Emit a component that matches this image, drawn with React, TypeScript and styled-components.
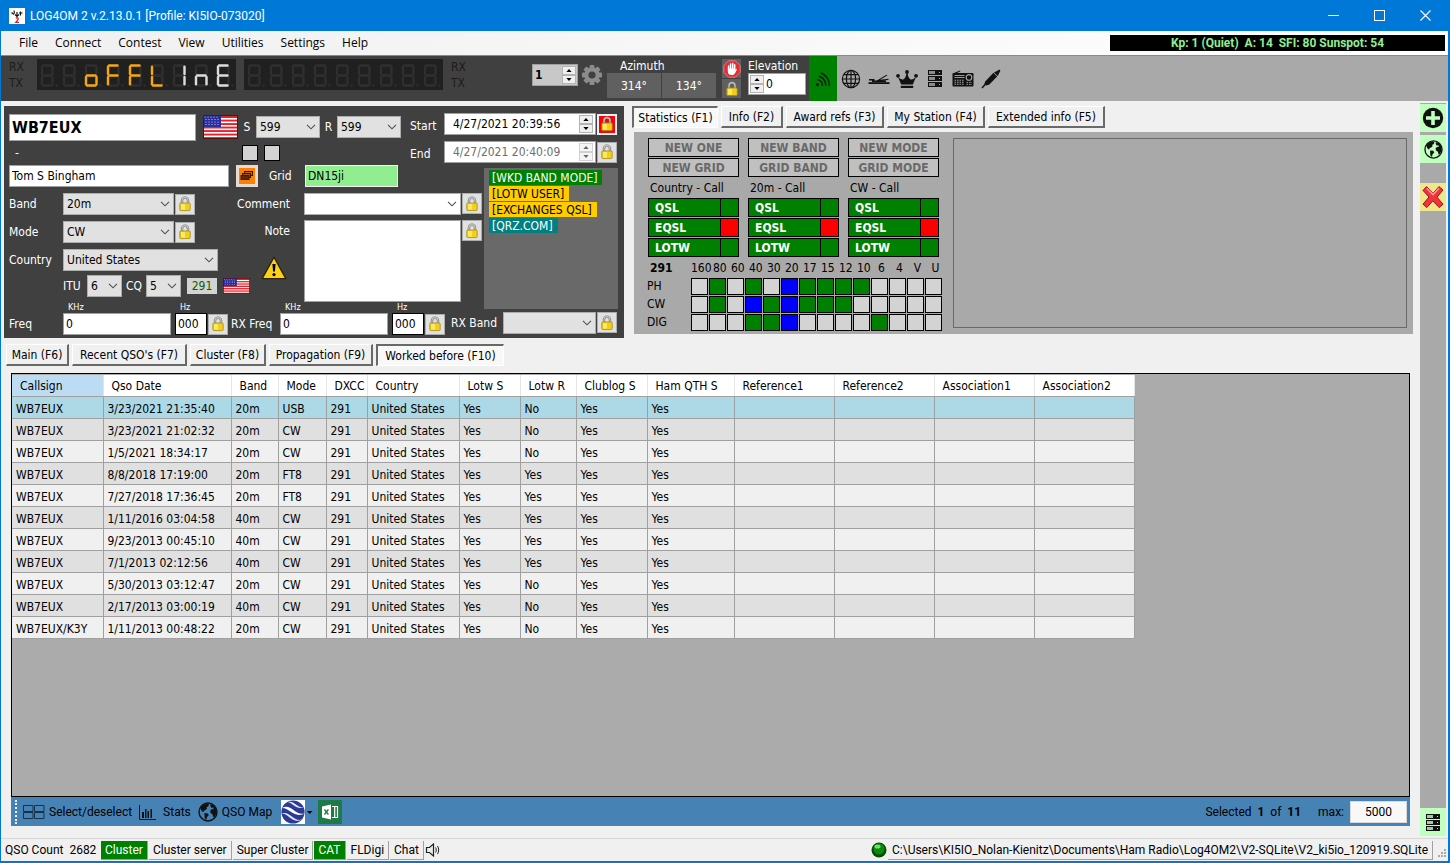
import React from 'react';
import styled, { createGlobalStyle } from 'styled-components';

const TAHOMA = `Tahoma, "DejaVu Sans Condensed", "DejaVu Sans", sans-serif`;
const SEGOE = `"Segoe UI", "Open Sans", "Noto Sans", sans-serif`;
const SEGOE_NARROW = `"Segoe UI", Roboto, "Open Sans", sans-serif`;

const GlobalStyle = createGlobalStyle`
  *, *::before, *::after { box-sizing: border-box; }
  body { margin: 0; background: #f0f0f0; font-family: ${TAHOMA}; font-size: 12px; color: #000; }
  button, input, select, textarea { font: inherit; color: inherit; margin: 0; border-radius: 0; }
  button { padding: 0; cursor: default; }
  svg { display: block; flex: none; }
`;

/* ---------- window frame ---------- */

const Window = styled.div`
  min-height: 100vh;
  display: flex;
  flex-direction: column;
  border: solid #0078d7;
  border-width: 0 2px 2px 1px;
  background: #f0f0f0;
`;

const TitleBar = styled.header`
  display: flex;
  align-items: center;
  height: 31px;
  padding-left: 8px;
  background: #0078d7;
  color: #fff;
  font-family: ${SEGOE_NARROW};
`;

const Title = styled.h1`
  flex: 1;
  margin: 0 0 0 5px;
  font-size: 12px;
  font-weight: 400;
`;

const CaptionButton = styled.button`
  width: 46px;
  height: 30px;
  display: grid;
  place-items: center;
  border: 0;
  background: none;
  color: #fff;
`;

const MenuBar = styled.nav`
  display: flex;
  align-items: center;
  height: 25px;
  padding: 0 3px 2px 10px;
  border-bottom: 1px solid #8a8a8a;
  background: linear-gradient(90deg, #f0f0f0, #ffffff);
  font-family: ${SEGOE};
`;

const MenuItem = styled.button`
  padding: 0 8px;
  margin-right: 1px;
  border: 0;
  background: none;
`;

const Propagation = styled.output`
  width: 335px;
  height: 16px;
  margin: 1px 0 0 auto;
  background: #000;
  color: #90ee90;
  font-family: ${SEGOE_NARROW};
  font-weight: 700;
  line-height: 16px;
  text-align: center;
  white-space: pre;
`;

/* ---------- toolbar ---------- */

const Toolbar = styled.div`
  display: flex;
  height: 45px;
  background: #a9a9a9;
`;

const RadioPanel = styled.div`
  display: flex;
  align-items: flex-start;
  width: 808px;
  padding: 3px 0 0 8px;
  background: #404040;
  color: #fff;
`;

const RxTx = styled.div<{ $width: number }>`
  width: ${p => p.$width}px;
  color: #1c1c1c;
  line-height: 16px;
`;

const Display = styled.div`
  width: 199px;
  height: 31px;
  margin-right: 8px;
  background: #202020;
`;

const Stack = styled.div<{ $gap?: number }>`
  display: flex;
  flex-direction: column;
  gap: ${p => p.$gap ?? 0}px;
`;

const NumberBox = styled.div<{ $width: number; $bg: string; $top?: number }>`
  display: flex;
  align-items: center;
  width: ${p => p.$width}px;
  height: 22px;
  margin-top: ${p => p.$top ?? 0}px;
  padding: 1px;
  border: 1px solid #a0a0a0;
  background: ${p => p.$bg};
  color: #000;
`;

const BareInput = styled.input<{ $bold?: boolean; $pad?: number }>`
  flex: 1;
  min-width: 0;
  height: 100%;
  border: 0;
  padding: 0 0 0 ${p => p.$pad ?? 2}px;
  background: transparent;
  font-weight: ${p => (p.$bold ? 700 : 400)};
`;

const SpinBox = styled.div`
  display: flex;
  flex-direction: column;
  width: 14px;
`;

const SpinButton = styled.button`
  display: grid;
  place-items: center;
  height: 9px;
  border: 1px solid #b4b4b4;
  background: #f0f0f0;
`;

const ToolGear = styled.button`
  margin: 5px 0 0 3px;
  border: 0;
  background: none;
`;

const Azimuth = styled.div`
  display: flex;
  flex-direction: column;
  width: 115px;
  margin-left: 4px;
  span { line-height: 14px; padding-left: 13px; }
  div { display: flex; gap: 1px; }
`;

const AngleButton = styled.button`
  width: 54px;
  height: 25px;
  border: 0;
  background: #606060;
`;

const SmallIconButton = styled.button`
  display: grid;
  place-items: center;
  width: 19px;
  height: 19px;
  border: 0;
  background: #606060;
`;

const Elevation = styled.div`
  display: flex;
  flex-direction: column;
  margin-left: 7px;
  label { line-height: 14px; }
`;

const ToolButton = styled.button<{ $active?: boolean }>`
  display: grid;
  place-items: center;
  width: 28px;
  height: 45px;
  border: 0;
  background: ${p => (p.$active ? '#008000' : 'transparent')};
`;

/* ---------- body ---------- */

const Body = styled.div`
  flex: 1;
  display: flex;
  padding: 2px 2px 0 3px;
`;

const Main = styled.main`
  flex: 1;
  min-width: 0;
  display: flex;
  flex-direction: column;
  padding: 3px 7px 0 0;
`;

const Upper = styled.div`
  display: grid;
  grid-template-columns: 620px minmax(0, 1fr);
  gap: 8px;
`;

const Side = styled.aside`
  display: flex;
  flex-direction: column;
  width: 26px;
  margin-bottom: 2px;
  background: #a9a9a9;
`;

const SideButton = styled.button<{ $bg: string; $gap?: number; $end?: boolean }>`
  display: grid;
  place-items: center;
  height: 28px;
  margin-top: ${p => (p.$end ? 'auto' : `${p.$gap ?? 0}px`)};
  border: 0;
  background: ${p => p.$bg};
`;

/* ---------- QSO form ---------- */

const QsoForm = styled.form`
  padding: 7px 6px 2px 5px;
  background: #404040;
  color: #fff;
  input, select, textarea { color: #000; }
`;

const FormTop = styled.div`
  display: flex;
`;

const Line = styled.div<{ $height?: number; $gap?: number }>`
  display: flex;
  align-items: center;
  height: ${p => p.$height ?? 22}px;
  gap: ${p => p.$gap ?? 0}px;
`;

const Label = styled.label<{ $width?: number; $align?: string }>`
  flex: none;
  width: ${p => (p.$width ? `${p.$width}px` : 'auto')};
  text-align: ${p => p.$align ?? 'left'};
  white-space: nowrap;
`;

const CallInput = styled.input`
  width: 187px;
  height: 27px;
  margin-right: 7px;
  padding: 0 2px;
  border: 1px solid #a0a0a0;
  background: #fff;
  font-size: 16px;
  font-weight: 700;
`;

const TextInput = styled.input<{ $width: number; $bg?: string; $tone?: string }>`
  width: ${p => p.$width}px;
  height: 22px;
  padding: 0 0 1px 2px;
  border: 1px solid ${p => p.$tone ?? '#a0a0a0'};
  background: ${p => p.$bg ?? '#fff'};
`;

const Dash = styled.span`
  width: 233px;
  padding-left: 6px;
`;

const Tick = styled.input`
  appearance: none;
  width: 16px;
  height: 16px;
  border: 1px solid #000;
  background: #d3d3d3;
`;

const Dates = styled.div`
  display: grid;
  grid-template-columns: 34px 152px 21px;
  grid-auto-rows: 22px;
  gap: 6px 0;
  align-items: center;
  padding-left: 9px;
  ${Label} { padding-top: 4px; }
`;

const DateBox = styled.div<{ $off?: boolean }>`
  display: flex;
  align-items: center;
  height: 22px;
  padding: 1px 2px 1px 0;
  border: 1px solid #a0a0a0;
  background: #fff;
  input { color: ${p => (p.$off ? '#6d6d6d' : '#000')}; }
  button { opacity: ${p => (p.$off ? 0.6 : 1)}; }
`;

const LockButton = styled.button<{ $alert?: boolean }>`
  display: grid;
  place-items: center;
  flex: none;
  width: 20px;
  height: 21px;
  margin-left: 1px;
  border: ${p => (p.$alert ? '2px solid #e6f0fa' : '1px solid #adadad')};
  background: ${p => (p.$alert ? '#ff0000' : '#e1e1e1')};
`;

const CardButton = styled.button`
  display: grid;
  place-items: center;
  width: 22px;
  height: 22px;
  margin: 0 11px 0 7px;
  border: 3px solid #e4dcd4;
  background: #ff8000;
`;

const FormGrid = styled.div`
  display: grid;
  grid-template-columns: 442px 33px 134px;
  grid-template-rows: 137px 7px 27px;
`;

const Details = styled.div`
  grid-area: 1 / 1 / 2 / 3;
`;

const DetailColumns = styled.div`
  display: flex;
  margin-top: 6px;
`;

const Fields = styled.div`
  width: 228px;
  display: grid;
  grid-template-columns: 54px max-content;
  grid-auto-rows: 22px;
  row-gap: 6px;
  align-items: center;
`;

const Zones = styled.div`
  grid-column: 2;
  display: flex;
  align-items: center;
  height: 20px;
  margin-top: -4px;
`;

const Dxcc = styled.output`
  width: 30px;
  height: 16px;
  margin: 0 6px;
  background: #d3d3d3;
  color: #006400;
  line-height: 16px;
  text-align: center;
`;

const Remarks = styled.div`
  display: grid;
  grid-template-columns: 53px 192px;
  grid-template-rows: 22px 82px;
  row-gap: 5px;
`;

const RemarkLabel = styled.div`
  display: flex;
  flex-direction: column;
  align-items: flex-end;
  gap: 18px;
  padding-top: 4px;
  svg { margin-right: 3px; }
`;

const RemarkField = styled.div`
  display: flex;
  align-items: flex-start;
  padding-left: 14px;
`;

const NoteArea = styled.textarea`
  flex: none;
  width: 157px;
  height: 82px;
  border: 1px solid #a0a0a0;
  background: #fff;
  resize: none;
`;

const SelectFrame = styled.span<{ $width: number }>`
  position: relative;
  display: block;
  flex: none;
  width: ${p => p.$width}px;
  svg { position: absolute; right: 4px; top: 8px; pointer-events: none; }
`;

const Select = styled.select<{ $bg?: string }>`
  appearance: none;
  display: block;
  width: 100%;
  height: 22px;
  padding: 0 14px 0 3px;
  border: 1px solid #adadad;
  background: ${p => p.$bg ?? '#e1e1e1'};
`;

const Tags = styled.ul`
  grid-area: 1 / 3 / 3 / 4;
  margin: 3px 0 0;
  padding: 2px 5px;
  list-style: none;
  background: #696969;
  li { height: 16px; }
`;

const Tag = styled.span<{ $bg: string; $fg: string }>`
  display: inline-block;
  height: 15px;
  padding: 0 5px 0 3px;
  background: ${p => p.$bg};
  color: ${p => p.$fg};
  line-height: 16px;
  white-space: nowrap;
`;

const Frequencies = styled.div`
  grid-area: 2 / 1 / 4 / 2;
  display: flex;
  gap: 3px;
`;

const FreqGroup = styled.div<{ $label: number }>`
  display: grid;
  grid-template-columns: ${p => p.$label}px 112px 32px 21px;
  grid-template-rows: 11px 22px;
  align-items: center;
  small { font-size: 9px; line-height: 11px; padding-left: 5px; }
`;

const RxBand = styled.div`
  grid-area: 3 / 2 / 4 / 4;
  display: flex;
  align-items: center;
`;

/* ---------- tabs ---------- */

const TabList = styled.div`
  display: flex;
  gap: 3px;
`;

const Tab = styled.button<{ $on?: boolean; $width: number }>`
  min-width: ${p => p.$width}px;
  height: 22px;
  padding-top: 1px;
  border-style: solid;
  border-width: ${p => (p.$on ? '2px 1px 1px 2px' : '1px 2px 2px 1px')};
  border-color: ${p => (p.$on ? '#696969 #fff #fff #696969' : '#fff #696969 #696969 #fff')};
  background: ${p => (p.$on ? '#f8f8f8' : '#f0f0f0')};
  line-height: 18px;
  white-space: nowrap;
`;

/* ---------- statistics ---------- */

const StatColumn = styled.section`
  display: flex;
  flex-direction: column;
  min-width: 0;
  padding-bottom: 4px;
`;

const StatPanel = styled.div`
  flex: 1;
  display: flex;
  margin: 4px 0 0 2px;
  padding: 6px 6px 1px;
  background: #a9a9a9;
`;

const Summary = styled.div`
  width: 313px;
  padding-left: 8px;
`;

const Groups = styled.div`
  display: grid;
  grid-template-columns: repeat(3, 91px);
  gap: 9px;
`;

const NewFlag = styled.div`
  height: 19px;
  margin-bottom: 1px;
  border: 1px solid #000;
  background: #c0c0c0;
  color: #696969;
  font-weight: 700;
  line-height: 18px;
  text-align: center;
`;

const GroupTitle = styled.div`
  height: 20px;
  padding-left: 2px;
  line-height: 20px;
`;

const Confirm = styled.div<{ $ok: boolean }>`
  display: flex;
  height: 19px;
  margin-bottom: 1px;
  border: 1px solid #000;
  background: #008000;
  color: #fff;
  font-weight: 700;
  line-height: 18px;
  padding-left: 6px;
  &::after {
    content: '';
    width: 18px;
    margin-left: auto;
    border-left: 1px solid #000;
    background: ${p => (p.$ok ? '#008000' : '#ff0000')};
  }
`;

const Matrix = styled.table`
  width: 297px;
  margin: 1px 0 0 -2px;
  border-spacing: 1px;
  table-layout: fixed;
  th { height: 17px; padding: 0; font-weight: 400; text-align: left; line-height: 17px; white-space: nowrap; }
  thead th { text-align: center; }
  thead th + th + th { padding-left: 4px; }
  thead th:first-child { text-align: left; font-weight: 700; padding-left: 3px; }
`;

const Slot = styled.td<{ $state: string }>`
  height: 17px;
  padding: 0;
  border: 1px solid #000;
  background: ${p => (p.$state === 'g' ? '#008000' : p.$state === 'b' ? '#0000ff' : '#d3d3d3')};
`;

const EmptyBox = styled.div`
  flex: 1;
  margin-bottom: 5px;
  border: 1px solid #696969;
`;

/* ---------- log table ---------- */

const LogTabs = styled(TabList)`
  padding: 6px 0 0 2px;
`;

const LogPanel = styled.div`
  flex: 1;
  display: flex;
  flex-direction: column;
  margin: 7px 3px 12px 7px;
`;

const GridArea = styled.div`
  flex: 1;
  overflow: hidden;
  padding-top: 1px;
  border: 1px solid #000;
  background: #ababab;
`;

const LogTable = styled.table`
  width: 1122px;
  table-layout: fixed;
  border-collapse: collapse;
  th {
    height: 21px;
    padding: 2px 0 0 8px;
    border-right: 1px solid #e5e5e5;
    border-bottom: 1px solid #a0a0a0;
    background: #fff;
    font-weight: 400;
    text-align: left;
    line-height: 17px;
    white-space: nowrap;
  }
  th:first-child { background: #bcdcf4; }
`;

const LogRow = styled.tr<{ $shade: string }>`
  height: 22px;
  background: ${p => p.$shade};
  td {
    padding: 4px 0 0 4px;
    border-right: 1px solid #a0a0a0;
    border-bottom: 1px solid #a0a0a0;
    line-height: 17px;
    white-space: nowrap;
  }
`;

const ActionBar = styled.div`
  display: flex;
  align-items: center;
  height: 29px;
  padding: 0 3px 0 4px;
  background: #4682b4;
  font-family: ${SEGOE_NARROW};
  white-space: pre;
`;

const Grip = styled.span`
  height: 24px;
  margin-right: 6px;
  border-left: 2px dotted #e8f0f8;
`;

const ActionButton = styled.button<{ $gap?: number; $inner?: number }>`
  display: flex;
  align-items: center;
  gap: ${p => p.$inner ?? 4}px;
  margin-right: ${p => p.$gap ?? 7}px;
  border: 0;
  background: none;
`;

const Totals = styled.span`
  margin: 0 17px 0 auto;
`;

const MaxInput = styled.input`
  width: 57px;
  height: 22px;
  margin-left: 6px;
  border: 1px solid #dadada;
  background: #f8f8f8;
  text-align: center;
`;

/* ---------- status bar ---------- */

const StatusBar = styled.footer`
  display: flex;
  align-items: center;
  height: 23px;
  padding: 0 1px 0 4px;
  border-top: 1px solid #d7d7d7;
  font-family: ${SEGOE_NARROW};
  white-space: pre;
`;

const Count = styled.span`
  width: 96px;
`;

const Spacer = styled.span`
  flex: 1;
`;

const StatusButton = styled.button<{ $on?: boolean }>`
  height: 19px;
  margin-right: 1px;
  padding: 0 4px;
  border: solid #a0a0a0;
  border-width: 0 1px 1px 0;
  background: ${p => (p.$on ? '#008000' : 'transparent')};
  color: ${p => (p.$on ? '#fff' : '#000')};
  line-height: 18px;
`;

const PathLabel = styled.span`
  height: 19px;
  margin-left: 1px;
  padding: 0 4px;
  border: solid #a0a0a0;
  border-width: 0 1px 1px 0;
  line-height: 18px;
`;

/* ---------- drawings ---------- */

const Lock = () => (
  <svg width="14" height="16" viewBox="0 0 14 16">
    <path d="M4 8V4.6a3 3 0 0 1 6 0V8" fill="none" stroke="#777" strokeWidth="2.4" />
    <path d="M4 8V4.6a3 3 0 0 1 6 0V8" fill="none" stroke="#c8c8c8" strokeWidth="1.1" />
    <rect x="1.8" y="7" width="10.4" height="7.6" rx="1" fill="#f3cf1c" stroke="#a58a14" strokeWidth="0.8" />
    <rect x="3" y="8" width="4" height="5.6" fill="#fff27a" opacity="0.75" />
  </svg>
);

const Chevron = () => (
  <svg width="10" height="6" viewBox="0 0 10 6">
    <path d="M1 .8 5 4.8 9 .8" fill="none" stroke="#505050" strokeWidth="1.1" />
  </svg>
);

const UsFlag = ({ width, height }: { width: number; height: number }) => (
  <svg width={width} height={height} viewBox="0 0 35 24" preserveAspectRatio="none" role="img" aria-label="United States">
    <rect width="35" height="24" fill="#e8202a" />
    {[3, 6.5, 10, 13.5, 17, 20.5].map(y => <rect key={y} y={y} width="35" height="1.6" fill="#fff" />)}
    <rect width="18" height="12" fill="#2a2f9c" />
    {[2, 4.5, 7, 9.5].map(y =>
      [2, 5, 8, 11, 14].map(x => <circle key={`${x}-${y}`} cx={x + (y % 2 ? 1 : 0)} cy={y} r="0.6" fill="#cfd4ff" />))}
    <rect x=".5" y=".5" width="34" height="23" fill="none" stroke="#5a1010" />
  </svg>
);

const SEGMENTS: Record<string, string> = {
  a: 'M3 1.5H11.5', b: 'M12.5 2.8V10', c: 'M12.5 13V20.2', d: 'M3 21.5H11.5',
  e: 'M2 13V20.2', f: 'M2 2.8V10', g: 'M3 11.5H11.5',
};

const SegmentDisplay = ({ digits, colors, text }: { digits: string[]; colors: string[]; text: string }) => (
  <Display>
    <svg width="199" height="31" viewBox="0 0 199 31" role="img" aria-label={text}>
      {Array.from({ length: 9 }, (_, i) => (
        <g key={i} transform={`translate(${3 + i * 22} 5)`} strokeLinecap="round" fill="none">
          {Object.entries(SEGMENTS).map(([k, d]) => <path key={k} d={d} stroke="#2f2f2f" strokeWidth="2.4" />)}
          <circle cx="16.5" cy="21.5" r="1.2" fill="#2f2f2f" />
          {(digits[i] ?? '').split('').map(k => <path key={k} d={SEGMENTS[k]} stroke={colors[i]} strokeWidth="2.4" />)}
        </g>
      ))}
    </svg>
  </Display>
);

const Gear = () => (
  <svg width="22" height="22" viewBox="0 0 22 22">
    <g fill="#8c8c8c">
      {[0, 45, 90, 135].map(a => <rect key={a} x="8.6" y="1" width="4.8" height="20" rx="1" transform={`rotate(${a} 11 11)`} />)}
      <circle cx="11" cy="11" r="7.6" />
    </g>
    <circle cx="11" cy="11" r="3.6" fill="#404040" />
  </svg>
);

const StopHand = () => (
  <svg width="18" height="18" viewBox="0 0 18 18">
    <path d="M5.6.8h6.8l4.8 4.8v6.8l-4.8 4.8H5.6L.8 12.4V5.6z" fill="#dd3038" stroke="#f08a8e" strokeWidth=".8" />
    <path d="M5.6 11V6M7.6 9V4M9.7 9V3.6M11.7 9.4V4.8" stroke="#fff" strokeWidth="1.5" strokeLinecap="round" />
    <path d="M4.9 8.6V12c0 2 1.6 3 3.8 3 1.8 0 2.8-.8 3.6-2.3l1.7-3.4c-.8-.5-1.4 0-2.3 1.2V8.6z" fill="#fff" />
  </svg>
);

const Signal = () => (
  <svg width="16" height="16" viewBox="0 0 16 16" fill="none" stroke="#0a1c0a" strokeWidth="1.5">
    <circle cx="2.4" cy="13.6" r="1.6" fill="#0a1c0a" stroke="none" />
    <path d="M2.6 8.8a5.4 5.4 0 0 1 4.8 6M4 5.2a10 10 0 0 1 6.8 9.6M5.8 1.8a13.6 13.6 0 0 1 8.6 13" />
  </svg>
);

const Globe = () => (
  <svg width="20" height="20" viewBox="0 0 20 20" fill="none" stroke="#111" strokeWidth="1.2">
    <circle cx="10" cy="10" r="8.6" />
    <ellipse cx="10" cy="10" rx="4.6" ry="8.6" />
    <path d="M10 1.4v17.2M1.4 10h17.2M3 5.6h14M3 14.4h14" />
  </svg>
);

const Key = () => (
  <svg width="22" height="12" viewBox="0 0 22 12">
    <path d="M.5 9.2h21v1.8H.5z" fill="#111" />
    <path d="M1 6h5.5v1.4H1zM4 7.6h14V9H4z" fill="#111" />
    <path d="m8.500 7.800 10-6 .8.700-7.300 4.300 8.500-1.100.2 1-11 2.200z" fill="#111" />
  </svg>
);

const Crown = () => (
  <svg width="22" height="20" viewBox="0 0 22 20" fill="#111">
    <path d="M2 8c1.500 1.500 3 2.500 4.500 2.500C8.500 10.500 10 8 10.300 4.500h1.400C12 8 13.500 10.500 15.500 10.500 17 10.500 18.500 9.500 20 8l-3.200 7.500H5.200z" />
    <path d="M4.800 16.800h12.400v2.200H4.800z" />
    <circle cx="11" cy="3" r="1.900" /><circle cx="2" cy="6.800" r="1.900" /><circle cx="20" cy="6.800" r="1.900" />
  </svg>
);

const Server = ({ light = '#a9a9a9' }: { light?: string }) => (
  <svg width="14" height="17" viewBox="0 0 14 17">
    {[0, 6, 12].map(y => (
      <g key={y}>
        <rect y={y} width="14" height="5" fill="#111" />
        <rect x="1" y={y + 1} width="6" height="3" fill={light} opacity=".8" />
        <rect x="11" y={y + 2} width="1" height="1" fill={light} />
      </g>
    ))}
  </svg>
);

const Transceiver = () => (
  <svg width="22" height="17" viewBox="0 0 22 17">
    <path d="M2 3 8 .4l.4.8L5 3z" fill="#111" />
    <rect x=".5" y="3" width="21" height="13.5" rx="1" fill="#111" />
    <path d="M2.5 5.5h10M2.5 7.5h10" stroke="#a9a9a9" strokeWidth=".9" />
    <circle cx="17" cy="7.4" r="2.8" fill="#111" stroke="#a9a9a9" strokeWidth="1.1" />
    <path d="M2.5 10.2h10M2.5 12.2h10M2.5 14.2h10" stroke="#a9a9a9" strokeWidth="1" strokeDasharray="1.6 .9" />
    <path d="M14.5 12.4h5.5M14.5 14.4h5.5" stroke="#a9a9a9" strokeWidth=".9" strokeDasharray="1.6 .9" />
  </svg>
);

const Plug = () => (
  <svg width="20" height="20" viewBox="0 0 20 20">
    <path d="M1 19 4.500 15" stroke="#111" strokeWidth="1.500" />
    <path d="M4.200 12.400 12.400 3.800l3.800 3.600L8 15.800l-3 .8-1.600-1.600z" fill="#111" />
    <path d="M13 3.400 18.600.6l.8.8-2.600 5.600z" fill="#111" />
  </svg>
);

const Cards = () => (
  <svg width="14" height="12" viewBox="0 0 14 12" stroke="#3a1c00">
    <rect x="4.5" y="1.5" width="8" height="4" fill="#c06000" />
    <rect x="2.5" y="3.5" width="8" height="4" fill="#a85400" />
    <rect x="1" y="5.5" width="8" height="4" fill="#5c2c00" />
  </svg>
);

const Warning = () => (
  <svg width="26" height="24" viewBox="0 0 26 24">
    <path d="M13 1.2 24.8 22.6H1.2z" fill="#fdd017" stroke="#2a2200" strokeWidth="1.3" strokeLinejoin="round" />
    <path d="M11.4 8h3.2l-.7 7.6h-1.8z" fill="#000" />
    <circle cx="13" cy="18.6" r="1.6" fill="#000" />
  </svg>
);

const Plus = () => (
  <svg width="22" height="22" viewBox="0 0 22 22">
    <circle cx="11" cy="11" r="10.2" fill="#111" />
    <path d="M11 4v14M4 11h14" stroke="#c0ffc0" strokeWidth="3.6" />
  </svg>
);

const Earth = ({ size = 20 }: { size?: number }) => (
  <svg width={size} height={size} viewBox="0 0 20 20">
    <circle cx="10" cy="10" r="9" fill="none" stroke="#111" strokeWidth="1.4" />
    <path d="M2.4 6C4 3.4 6.6 1.600 9.600 1.400l1.400 1.200-.8 1.800-1.600.6.4 1.600L7.600 8 6 8.400l-.6 1.800L3.600 9zM6.400 11l3.400.4 1 1.800-1.800 1.800-.6 2.800L6.600 16zM12.400 2l3.400 1.400 2.600 3.600.4 4-2 3.600-1.400 1-.8-3.200-2-1.400-.4-2.400 1.800-1.600 1.600.4-.4-1.800-2 .2-.8-1.800z" fill="#111" />
  </svg>
);

const RedCross = () => (
  <svg width="22" height="24" viewBox="0 0 22 24">
    <path d="M4.6 1.6 11 8.4l6-6.8 4 3.4-6 7.2 6 7-3.8 3.4-6.4-6.8-6 6.8L1 19.2 7 12 1 5.4z" fill="#f0343c" stroke="#9c1218" strokeWidth="1" />
    <path d="M4.8 3.2 11 9.8l6-6.6" stroke="#ff9a9e" strokeWidth="1.4" fill="none" />
  </svg>
);

const AppLogo = () => (
  <svg width="16" height="16" viewBox="0 0 16 16">
    <rect width="16" height="16" fill="#fff" />
    <path d="M2.5 4.5 5 6.5M5 2.5l.5 3M6 6.5l2 2 2-2M8 8.5V4M13.5 5H10M11.5 3.5v4" stroke="#111" strokeWidth="1.2" fill="none" />
    <path d="M6.8 10.3c1.6-1.2 3.2 0 2 1.5L6.8 14.3H10" stroke="#d22" strokeWidth="1.3" fill="none" />
  </svg>
);

const Spin = ({ name }: { name: string }) => (
  <SpinBox>
    <SpinButton type="button" aria-label={`${name} up`}>
      <svg width="6" height="3" viewBox="0 0 6 3"><path d="M3 0 5.6 3H.4z" /></svg>
    </SpinButton>
    <SpinButton type="button" aria-label={`${name} down`}>
      <svg width="6" height="3" viewBox="0 0 6 3"><path d="M3 3 5.6 0H.4z" /></svg>
    </SpinButton>
  </SpinBox>
);

/* ---------- parts ---------- */

const Combo = ({ id, value, width, bg }: { id: string; value: string; width: number; bg?: string }) => (
  <SelectFrame $width={width}>
    <Select id={id} $bg={bg} defaultValue={value}><option>{value}</option></Select>
    <Chevron />
  </SelectFrame>
);

const LockToggle = ({ name, alert }: { name: string; alert?: boolean }) => (
  <LockButton type="button" $alert={alert} aria-label={`Lock ${name}`}><Lock /></LockButton>
);

const Frequency = ({ id, label, width }: { id: string; label: string; width: number }) => (
  <FreqGroup $label={width}>
    <span /><small>KHz</small><small>Hz</small><span />
    <Label htmlFor={id}>{label}</Label>
    <TextInput id={id} $width={108} defaultValue="0" />
    <TextInput $width={32} $tone="#000" defaultValue="000" aria-label={`${label} Hz`} />
    <LockToggle name={label} />
  </FreqGroup>
);

const Tabs = ({ items, active }: { items: [string, number][]; active: number }) => (
  <>
    {items.map(([t, w], i) => (
      <Tab key={t} role="tab" $width={w} $on={i === active} aria-selected={i === active}>{t}</Tab>
    ))}
  </>
);

const MENU = ['File', 'Connect', 'Contest', 'View', 'Utilities', 'Settings', 'Help'];

const INFO_TABS: [string, number][] = [
  ['Statistics (F1)', 86], ['Info (F2)', 62], ['Award refs (F3)', 98], ['My Station (F4)', 98], ['Extended info (F5)', 117],
];

const LOG_TABS: [string, number][] = [
  ['Main (F6)', 63], ["Recent QSO's (F7)", 115], ['Cluster (F8)', 76], ['Propagation (F9)', 104], ['Worked before (F10)', 128],
];

const TAGS = [
  ['[WKD BAND MODE]', '#008000', '#fff'],
  ['[LOTW USER]', '#ffcc00', '#000'],
  ['[EXCHANGES QSL]', '#ffcc00', '#000'],
  ['[QRZ.COM]', '#008080', '#fff'],
];

const GROUPS = [
  { flags: ['NEW ONE', 'NEW GRID'], title: 'Country - Call' },
  { flags: ['NEW BAND', 'GRID BAND'], title: '20m - Call' },
  { flags: ['NEW MODE', 'GRID MODE'], title: 'CW - Call' },
];

const BANDS = ['160', '80', '60', '40', '30', '20', '17', '15', '12', '10', '6', '4', 'V', 'U'];
const SLOTS: [string, string][] = [
  ['PH', '.g.g.bgggg....'],
  ['CW', '.g.bgbggg.....'],
  ['DIG', '...ggb....g...'],
];

const COLUMNS: [string, number][] = [
  ['Callsign', 91], ['Qso Date', 128], ['Band', 47], ['Mode', 48], ['DXCC', 41], ['Country', 92], ['Lotw S', 61],
  ['Lotw R', 56], ['Clublog S', 71], ['Ham QTH S', 87], ['Reference1', 100], ['Reference2', 100],
  ['Association1', 100], ['Association2', 100],
];

const LOG: [string, string, string, string, string][] = [
  ['WB7EUX', '3/23/2021 21:35:40', '20m', 'USB', 'No'],
  ['WB7EUX', '3/23/2021 21:02:32', '20m', 'CW', 'No'],
  ['WB7EUX', '1/5/2021 18:34:17', '20m', 'CW', 'No'],
  ['WB7EUX', '8/8/2018 17:19:00', '20m', 'FT8', 'Yes'],
  ['WB7EUX', '7/27/2018 17:36:45', '20m', 'FT8', 'Yes'],
  ['WB7EUX', '1/11/2016 03:04:58', '40m', 'CW', 'Yes'],
  ['WB7EUX', '9/23/2013 00:45:10', '40m', 'CW', 'Yes'],
  ['WB7EUX', '7/1/2013 02:12:56', '40m', 'CW', 'Yes'],
  ['WB7EUX', '5/30/2013 03:12:47', '20m', 'CW', 'No'],
  ['WB7EUX', '2/17/2013 03:00:19', '40m', 'CW', 'No'],
  ['WB7EUX/K3Y', '1/11/2013 00:48:22', '20m', 'CW', 'No'],
];

const AMBER = '#f5a80c';
const WHITE = '#dcdcdc';

function TopToolbar() {
  return (
    <Toolbar>
      <RadioPanel>
        <RxTx $width={28}>RX<br />TX</RxTx>
        <SegmentDisplay
          text="oFFLInE"
          digits={['', '', 'cdeg', 'aefg', 'aefg', 'def', 'bc', 'ceg', 'adefg']}
          colors={['', '', AMBER, AMBER, AMBER, AMBER, WHITE, WHITE, WHITE]}
        />
        <SegmentDisplay text="" digits={[]} colors={[]} />
        <RxTx $width={81}>RX<br />TX</RxTx>
        <NumberBox $width={46} $bg="#c8c8c8" $top={5}>
          <BareInput $bold defaultValue="1" aria-label="Radio number" $pad={1} />
          <Spin name="Radio number" />
        </NumberBox>
        <ToolGear type="button" aria-label="Radio settings"><Gear /></ToolGear>
        <Azimuth>
          <span>Azimuth</span>
          <div><AngleButton type="button">314°</AngleButton><AngleButton type="button">134°</AngleButton></div>
        </Azimuth>
        <Stack $gap={1}>
          <SmallIconButton type="button" aria-label="Stop rotator"><StopHand /></SmallIconButton>
          <SmallIconButton type="button" aria-label="Lock rotator"><Lock /></SmallIconButton>
        </Stack>
        <Elevation>
          <label htmlFor="elevation">Elevation</label>
          <NumberBox $width={58} $bg="#fff">
            <Spin name="Elevation" />
            <BareInput id="elevation" defaultValue="0" />
          </NumberBox>
        </Elevation>
      </RadioPanel>
      <ToolButton $active aria-label="Signal"><Signal /></ToolButton>
      <ToolButton aria-label="Globe"><Globe /></ToolButton>
      <ToolButton aria-label="CW keyer"><Key /></ToolButton>
      <ToolButton aria-label="Awards"><Crown /></ToolButton>
      <ToolButton aria-label="Cluster list"><Server /></ToolButton>
      <ToolButton aria-label="Transceiver"><Transceiver /></ToolButton>
      <ToolButton aria-label="Connections"><Plug /></ToolButton>
    </Toolbar>
  );
}

function Qso() {
  return (
    <QsoForm>
      <FormTop>
        <div>
          <Line $height={28}>
            <CallInput defaultValue="WB7EUX" aria-label="Callsign" />
            <UsFlag width={35} height={24} />
            <Label htmlFor="sent" $width={18} $align="center">S</Label>
            <Combo id="sent" value="599" width={64} />
            <Label htmlFor="rcvd" $width={17} $align="center">R</Label>
            <Combo id="rcvd" value="599" width={64} />
          </Line>
          <Line $height={24}>
            <Dash>-</Dash>
            <Line $gap={6}>
              <Tick type="checkbox" aria-label="Sent flag" />
              <Tick type="checkbox" aria-label="Received flag" />
            </Line>
          </Line>
        </div>
        <Dates>
          <Label htmlFor="start">Start</Label>
          <DateBox><BareInput id="start" $pad={8} defaultValue="4/27/2021 20:39:56" /><Spin name="Start" /></DateBox>
          <LockToggle name="start" alert />
          <Label htmlFor="end">End</Label>
          <DateBox $off><BareInput id="end" $pad={8} defaultValue="4/27/2021 20:40:09" /><Spin name="End" /></DateBox>
          <LockToggle name="end" />
        </Dates>
      </FormTop>
      <FormGrid>
        <Details>
          <Line>
            <TextInput $width={220} defaultValue="Tom S Bingham" aria-label="Name" />
            <CardButton type="button" aria-label="QSL card"><Cards /></CardButton>
            <Label htmlFor="grid" $width={36}>Grid</Label>
            <TextInput id="grid" $width={93} $bg="#90ee90" $tone="#f0f0f0" defaultValue="DN15ji" />
          </Line>
          <DetailColumns>
            <Fields>
              <Label htmlFor="band">Band</Label>
              <Line><Combo id="band" value="20m" width={111} /><LockToggle name="band" /></Line>
              <Label htmlFor="mode">Mode</Label>
              <Line><Combo id="mode" value="CW" width={111} /><LockToggle name="mode" /></Line>
              <Label htmlFor="country">Country</Label>
              <Combo id="country" value="United States" width={155} />
              <Zones>
                <Label htmlFor="itu" $width={24}>ITU</Label>
                <Combo id="itu" value="6" width={35} />
                <Label htmlFor="cq" $width={24} $align="center">CQ</Label>
                <Combo id="cq" value="5" width={35} />
                <Dxcc>291</Dxcc>
                <UsFlag width={27} height={16} />
              </Zones>
            </Fields>
            <Remarks>
              <RemarkLabel><Label htmlFor="comment">Comment</Label></RemarkLabel>
              <RemarkField>
                <Combo id="comment" value="" width={157} bg="#fff" /><LockToggle name="comment" />
              </RemarkField>
              <RemarkLabel><Label htmlFor="note">Note</Label><Warning /></RemarkLabel>
              <RemarkField><NoteArea id="note" /><LockToggle name="note" /></RemarkField>
            </Remarks>
          </DetailColumns>
        </Details>
        <Tags>{TAGS.map(([t, bg, fg]) => <li key={t}><Tag $bg={bg} $fg={fg}>{t}</Tag></li>)}</Tags>
        <Frequencies>
          <Frequency id="freq" label="Freq" width={54} />
          <Frequency id="rxfreq" label="RX Freq" width={49} />
        </Frequencies>
        <RxBand>
          <Label htmlFor="rxband" $width={52}>RX Band</Label>
          <Combo id="rxband" value="" width={93} />
          <LockToggle name="RX band" />
        </RxBand>
      </FormGrid>
    </QsoForm>
  );
}

function Statistics() {
  return (
    <StatColumn>
      <TabList role="tablist"><Tabs items={INFO_TABS} active={0} /></TabList>
      <StatPanel>
        <Summary>
          <Groups>
            {GROUPS.map(g => (
              <div key={g.title}>
                {g.flags.map(f => <NewFlag key={f}>{f}</NewFlag>)}
                <GroupTitle>{g.title}</GroupTitle>
                <Confirm $ok>QSL</Confirm>
                <Confirm $ok={false}>EQSL</Confirm>
                <Confirm $ok>LOTW</Confirm>
              </div>
            ))}
          </Groups>
          <Matrix>
            <colgroup><col />{BANDS.map(b => <col key={b} style={{ width: 17 }} />)}</colgroup>
            <thead><tr><th>291</th>{BANDS.map(b => <th key={b}>{b}</th>)}</tr></thead>
            <tbody>
              {SLOTS.map(([mode, row]) => (
                <tr key={mode}><th>{mode}</th>{row.split('').map((s, i) => <Slot key={i} $state={s} />)}</tr>
              ))}
            </tbody>
          </Matrix>
        </Summary>
        <EmptyBox />
      </StatPanel>
    </StatColumn>
  );
}

function Log() {
  return (
    <>
      <LogTabs role="tablist"><Tabs items={LOG_TABS} active={4} /></LogTabs>
      <LogPanel>
        <GridArea>
          <LogTable>
            <colgroup>{COLUMNS.map(([n, w]) => <col key={n} style={{ width: w }} />)}</colgroup>
            <thead><tr>{COLUMNS.map(([n]) => <th key={n}>{n}</th>)}</tr></thead>
            <tbody>
              {LOG.map(([call, date, band, mode, lotwR], i) => (
                <LogRow key={date} $shade={i === 0 ? '#add8e6' : i % 2 ? '#e0e0e0' : '#f0f0f0'}>
                  <td>{call}</td><td>{date}</td><td>{band}</td><td>{mode}</td><td>291</td><td>United States</td>
                  <td>Yes</td><td>{lotwR}</td><td>Yes</td><td>Yes</td><td /><td /><td /><td />
                </LogRow>
              ))}
            </tbody>
          </LogTable>
        </GridArea>
        <ActionBar>
          <Grip />
          <ActionButton>
            <svg width="22" height="16" viewBox="0 0 22 16" fill="none" stroke="#16324a" strokeWidth="1">
              <path d="M.5 1.5h9.5v6H.5zM11.5 1.5h9.5v6h-9.5zM.5 8.5h9.5v6H.5zM11.5 8.5h9.5v6h-9.5z" />
            </svg>
            Select/deselect
          </ActionButton>
          <ActionButton $inner={7}>
            <svg width="17" height="16" viewBox="0 0 17 16">
              <path d="M.5 1v14.5H17" fill="none" stroke="#111" />
              <path d="M3 8h2v6H3zM6 5h1.5v9H6zM8.5 7H10v7H8.5zM11.5 5H13v9h-1.5z" fill="#111" />
            </svg>
            Stats
          </ActionButton>
          <ActionButton $gap={9}><Earth />QSO Map</ActionButton>
          <ActionButton $gap={5} aria-label="Google Earth">
            <svg width="32" height="24" viewBox="0 0 32 24">
              <rect width="24" height="24" fill="#fff" />
              <circle cx="12" cy="12" r="11.6" fill="#2c3a94" />
              <path d="M1 8C5 5.500 9 7 12.500 10s7 4.500 11 3.500c-4 2.500-8.500 1.500-12.500-1S4.500 8 1 8z" fill="#fff" />
              <path d="M.8 13.500c4-1.500 7 .5 10.700 3.500s6.500 3.500 9.500 2.500c-3 2-7 1.500-10.500-.8S4.800 13.500.8 13.500z" fill="#e4e8ff" />
              <path d="M6.500 2c4-.8 6.500 1.200 9.500 3.200s4.500 2.300 6.600 2.600c-3 .8-6.100 0-8.900-1.800S9.500 2.200 6.500 2z" fill="#e4e8ff" />
              <path d="M26 11h5.500l-2.750 3z" fill="#000" />
            </svg>
          </ActionButton>
          <ActionButton aria-label="Export to Excel">
            <svg width="24" height="24" viewBox="0 0 24 24">
              <rect width="24" height="24" fill="#1f7a48" />
              <path d="M4 6.5 13 4.6v14.8L4 17.5z" fill="#fff" />
              <path d="m6.4 9.5 4 5M10.4 9.5l-4 5" stroke="#1f7a48" strokeWidth="1.4" />
              <path d="M14 6.5h5.5v11H14M16.7 6.5v11" fill="none" stroke="#fff" strokeWidth="1.2" />
            </svg>
          </ActionButton>
          <Totals>Selected  <b>1</b>  of  <b>11</b></Totals>
          <label htmlFor="max">max:</label>
          <MaxInput id="max" defaultValue="5000" />
        </ActionBar>
      </LogPanel>
    </>
  );
}

export default function App() {
  return (
    <>
      <GlobalStyle />
      <Window>
        <TitleBar>
          <AppLogo />
          <Title>LOG4OM 2 v.2.13.0.1 [Profile: KI5IO-073020]</Title>
          <CaptionButton aria-label="Minimize"><svg width="11" height="11"><path d="M0 5.5h11" stroke="#fff" /></svg></CaptionButton>
          <CaptionButton aria-label="Maximize"><svg width="11" height="11"><rect x=".5" y=".5" width="10" height="10" fill="none" stroke="#fff" /></svg></CaptionButton>
          <CaptionButton aria-label="Close"><svg width="11" height="11"><path d="m.5.5 10 10m0-10-10 10" stroke="#fff" strokeWidth="1.1" /></svg></CaptionButton>
        </TitleBar>
        <MenuBar>
          {MENU.map(m => <MenuItem key={m}>{m}</MenuItem>)}
          <Propagation>{'Kp: 1 (Quiet)  A: 14  SFI: 80 Sunspot: 54'}</Propagation>
        </MenuBar>
        <TopToolbar />
        <Body>
          <Main>
            <Upper><Qso /><Statistics /></Upper>
            <Log />
          </Main>
          <Side>
            <SideButton $bg="#c0ffc0" $gap={1} aria-label="Add QSO"><Plus /></SideButton>
            <SideButton $bg="#c0ffc0" $gap={3} aria-label="Lookup"><Earth size={19} /></SideButton>
            <SideButton $bg="#f0e68c" $gap={20} aria-label="Clear"><RedCross /></SideButton>
            <SideButton $bg="#c0ffc0" $end aria-label="Cluster panel"><Server light="#c0ffc0" /></SideButton>
          </Side>
        </Body>
        <StatusBar>
          <Count>QSO Count  2682</Count>
          <StatusButton $on>Cluster</StatusButton>
          <StatusButton>Cluster server</StatusButton>
          <StatusButton>Super Cluster</StatusButton>
          <StatusButton $on>CAT</StatusButton>
          <StatusButton>FLDigi</StatusButton>
          <StatusButton>Chat</StatusButton>
          <svg width="16" height="14" viewBox="0 0 16 14" fill="none" stroke="#222">
            <path d="M1.5 4.5h3l4-3.5v12l-4-3.5h-3z" fill="#eee" strokeWidth="1.2" />
            <path d="M10.5 4.5c1 1.5 1 3.5 0 5M12.5 3c1.6 2.5 1.6 5.5 0 8" />
          </svg>
          <Spacer />
          <svg width="16" height="16" viewBox="0 0 16 16">
            <circle cx="8" cy="8" r="7.5" fill="#064d06" />
            <circle cx="8" cy="7" r="5.5" fill="#0c8a0c" />
            <ellipse cx="6.5" cy="4.5" rx="3" ry="2" fill="#6ee06e" />
          </svg>
          <PathLabel>C:\Users\KI5IO_Nolan-Kienitz\Documents\Ham Radio\Log4OM2\V2-SQLite\V2_ki5io_120919.SQLite</PathLabel>
          <svg width="14" height="18" viewBox="0 0 14 18" fill="#a8a8a8">
            <path d="M11 8h2v2h-2zM8 11h2v2H8zM11 11h2v2h-2zM5 14h2v2H5zM8 14h2v2H8zM11 14h2v2h-2z" />
          </svg>
        </StatusBar>
      </Window>
    </>
  );
}
